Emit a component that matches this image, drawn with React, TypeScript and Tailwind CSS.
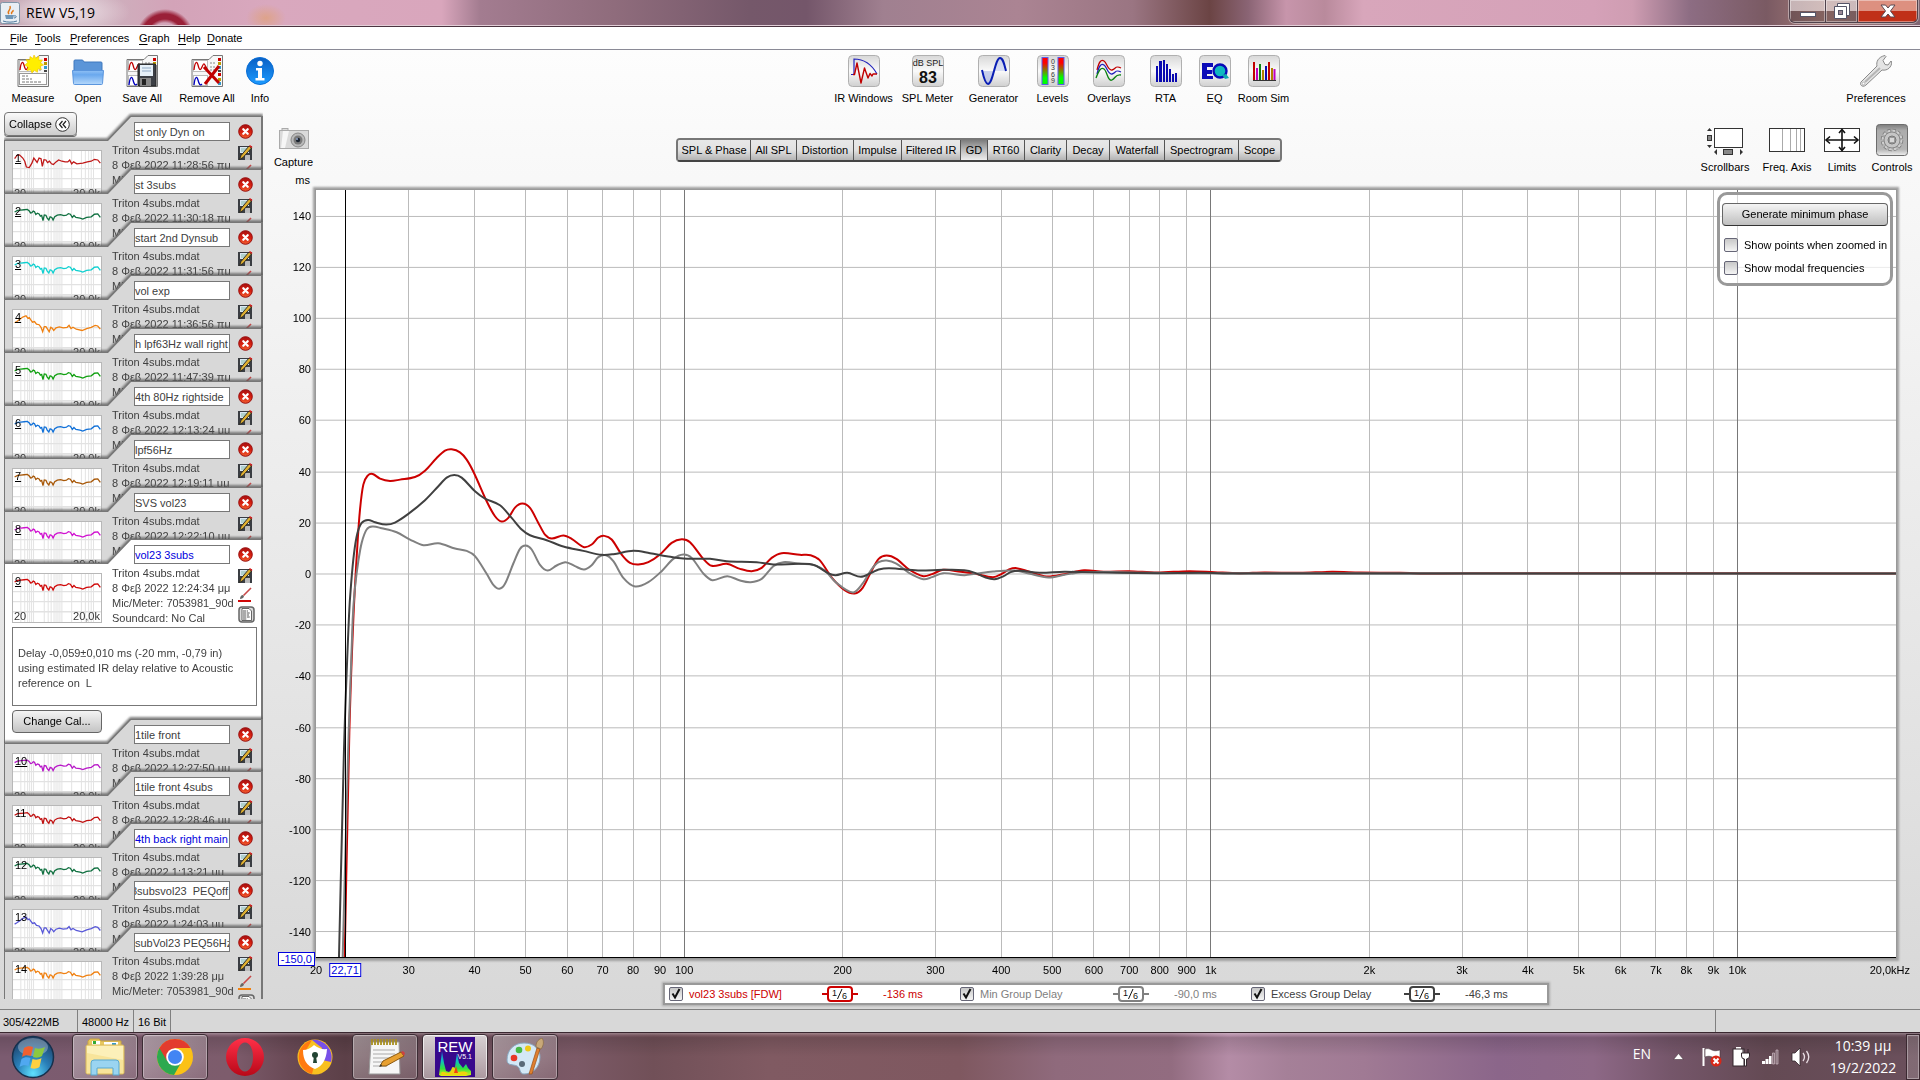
import React from "react";

type Pt = [number, number];

/* ---------- helpers ---------- */

function smooth(pts: Pt[]): string {
  let d = `M${pts[0][0]} ${pts[0][1]}`;
  for (let i = 0; i < pts.length - 1; i++) {
    const p0 = pts[Math.max(0, i - 1)];
    const p1 = pts[i];
    const p2 = pts[i + 1];
    const p3 = pts[Math.min(pts.length - 1, i + 2)];
    const h = (p2[0] - p1[0]) / 3;
    const m1 = (p2[1] - p0[1]) / (p2[0] - p0[0] || 1);
    const m2 = (p3[1] - p1[1]) / (p3[0] - p1[0] || 1);
    d += ` C${p1[0] + h} ${p1[1] + m1 * h} ${p2[0] - h} ${p2[1] - m2 * h} ${p2[0]} ${p2[1]}`;
  }
  return d;
}

const xPct = (f: number) => (Math.log10(f / 20) / 3) * 100;
const yPct = (v: number) => ((150 - v) / 300) * 100;

/* ---------- chart data (three drawing units per pixel) ---------- */

const redCurve: Pt[] = [
  [134, 1674], [148, 1000], [160, 660], [172, 440], [180, 330], [190, 255], [204, 227], [218, 223], [240, 237], [270, 244],
  [300, 240], [345, 232], [375, 213], [410, 175], [435, 153], [455, 149], [480, 158], [500, 180], [522, 220], [560, 305],
  [585, 350], [605, 366], [625, 355], [645, 324], [667, 312], [690, 325], [715, 370], [735, 405], [755, 417], [790, 408],
  [815, 418], [852, 443], [875, 435], [895, 414], [913, 409], [935, 420], [965, 465], [990, 490], [1015, 495], [1045, 488],
  [1080, 465], [1115, 430], [1145, 419], [1170, 428], [1210, 478], [1235, 499], [1280, 493], [1320, 508], [1355, 515],
  [1385, 505], [1415, 475], [1445, 461], [1500, 466], [1532, 467], [1559, 482], [1596, 535], [1634, 572], [1664, 582],
  [1688, 565], [1714, 515], [1736, 478], [1760, 468], [1789, 478], [1827, 510], [1870, 530], [1896, 524], [1929, 511],
  [1982, 517], [2025, 523], [2079, 533], [2105, 523], [2127, 510], [2150, 506], [2186, 516], [2239, 531], [2293, 524],
  [2352, 512], [2411, 517], [2486, 515], [2571, 519], [2668, 515], [2743, 518], [2818, 521], [2893, 519], [3000, 520],
  [3096, 517], [3180, 519], [3300, 520], [3400, 522], [3600, 521], [4788, 522],
];

const greyCurve: Pt[] = [
  [128, 1674], [146, 1000], [158, 660], [166, 555], [175, 485], [185, 430], [200, 390], [218, 381], [245, 386], [290, 398],
  [330, 420], [370, 437], [415, 431], [465, 447], [500, 454], [525, 470], [560, 523], [580, 556], [598, 568], [615, 553],
  [640, 492], [660, 448], [677, 438], [695, 450], [720, 496], [743, 513], [770, 498], [797, 488], [825, 500], [852, 510],
  [875, 497], [895, 473], [918, 467], [940, 485], [970, 535], [1005, 561], [1045, 548], [1085, 515], [1120, 478],
  [1150, 465], [1175, 475], [1210, 522], [1237, 542], [1282, 530], [1320, 543], [1352, 548], [1385, 538], [1420, 500],
  [1450, 488], [1500, 493], [1543, 497], [1575, 514], [1607, 548], [1659, 579], [1688, 552], [1714, 510], [1736, 488],
  [1760, 483], [1789, 492], [1827, 520], [1870, 539], [1896, 533], [1929, 521], [1993, 527], [2025, 523], [2079, 516],
  [2143, 513], [2186, 522], [2245, 534], [2293, 526], [2346, 518], [2464, 518], [2700, 521], [4788, 522],
];

const darkCurve: Pt[] = [
  [117, 1674], [132, 1050], [147, 650], [154, 545], [162, 462], [172, 402], [185, 370], [204, 361], [225, 368], [258, 375],
  [285, 369], [325, 343], [375, 302], [415, 260], [440, 234], [463, 226], [485, 234], [525, 275], [555, 297], [600, 317],
  [635, 355], [665, 390], [690, 407], [740, 422], [790, 441], [850, 454], [905, 466], [940, 464], [1000, 454], [1050, 461],
  [1100, 470], [1150, 477], [1230, 478], [1280, 485], [1370, 488], [1420, 495], [1500, 493], [1543, 497], [1586, 522],
  [1607, 527], [1642, 520], [1682, 532], [1714, 520], [1736, 510], [1768, 506], [1854, 513], [1929, 511], [1993, 512],
  [2025, 520], [2057, 534], [2084, 539], [2111, 530], [2132, 518], [2159, 514], [2218, 520], [2293, 517], [2411, 519],
  [2571, 521], [2700, 520], [2810, 522], [4788, 522],
];

const minorFreqs = [
  30, 40, 50, 60, 70, 80, 90, 200, 300, 400, 500, 600, 700, 800, 900, 2000, 3000, 4000, 5000, 6000, 7000, 8000, 9000,
];
const majorFreqs = [100, 1000, 10000];
const yTicks = [140, 120, 100, 80, 60, 40, 20, 0, -20, -40, -60, -80, -100, -120, -140];

const freqLabel = (f: number) => (f >= 1000 ? `${f / 1000}k` : `${f}`);

/* ---------- icons ---------- */

function MeasurementSheet({ children }: { children?: React.ReactNode }) {
  return (
    <svg width="32" height="32" viewBox="0 0 32 32" aria-hidden="true">
      <path d="M1 4.500h17l4-4h9.500v31H1z" fill="#f7f7f7" stroke="#777" />
      <rect x="2.500" y="5.500" width="14" height="11" fill="#fff" stroke="#bbb" />
      <path d="M3 15c1-9 3-9 4-5s2 7 4 2 2-4 5 2" fill="none" stroke="#c00000" strokeWidth="1.300" />
      <path d="M19 8h6M19 12h6M19 15h6" stroke="#888" strokeDasharray="2 1" />
      <path d="M27 3h3v3h-3z" fill="#c00" />
      <path d="M27 7h3v3h-3z" fill="#b90" />
      <path d="M27 11h3v3h-3z" fill="#39c" />
      <path d="M27 15h3v2h-3z" fill="#444" />
      {children}
    </svg>
  );
}

const lowerTrace = (
  <g>
    <rect x="2.500" y="20.500" width="14" height="10" fill="#fff" stroke="#bbb" />
    <path d="M3 30c1-9 3-9 4-5s2 6 4 4" fill="none" stroke="#0000c0" strokeWidth="1.300" />
    <path d="M27 18h3v3h-3z" fill="#c00" />
    <path d="M27 23h3v3h-3z" fill="#b90" />
    <path d="M27 27h3v3h-3z" fill="#39c" />
  </g>
);

function MeasureIcon() {
  return (
    <MeasurementSheet>
      <rect x="2.500" y="18.500" width="27" height="11" fill="#fff" stroke="#999" />
      <path d="M5 21h6M5 24h10M5 27h19" stroke="#777" strokeDasharray="3 1" />
      <path
        d="M17 0l1.800 3.200 3.200-1.900-.3 3.800 3.800-.2-2 3 3 2-3.400 1.500 1.400 3.200-3.500-.8-.6 3.500-3.100-2-2.300 2.700-1.500-3.200-3.400.8 1-3.400L8 10l2.600-2.400L9 4.600l3.700.3L13 1.500l3 2z"
        fill="#ffee00"
        stroke="#f0c000"
        strokeWidth=".6"
      />
    </MeasurementSheet>
  );
}

function OpenIcon() {
  return (
    <svg width="32" height="32" viewBox="0 0 32 32" aria-hidden="true">
      <defs>
        <linearGradient id="fold" x1="0" y1="0" x2="0" y2="1">
          <stop offset="0" stopColor="#8fc0f5" />
          <stop offset=".3" stopColor="#6aa8ee" />
          <stop offset="1" stopColor="#b5d8fb" />
        </linearGradient>
      </defs>
      <path d="M2 6q0-1 1-1h7q1 0 1.500 1l.5 1h17q1 0 1 1v9H2z" fill="#5b95d8" stroke="#3f78be" />
      <path d="M.5 15.500h31l-1 13q0 1-1 1h-27q-1 0-1-1z" fill="url(#fold)" stroke="#5a95dd" />
    </svg>
  );
}

function SaveAllIcon() {
  return (
    <MeasurementSheet>
      {lowerTrace}
      <path d="M12 9h17l1 1v21H13l-1-1z" fill="#3c3f45" stroke="#222" />
      <rect x="14" y="10" width="13" height="11" fill="#e6f0f8" />
      <path d="M16 13h9M16 16h9" stroke="#8fa8c4" />
      <rect x="14" y="23" width="11" height="8" fill="#888" />
      <rect x="16" y="24" width="4" height="6" fill="#222" />
    </MeasurementSheet>
  );
}

function RemoveAllIcon() {
  return (
    <MeasurementSheet>
      {lowerTrace}
      <path d="M13 12l15 16M28 11L14 29" stroke="#c00000" strokeWidth="3" />
    </MeasurementSheet>
  );
}

function InfoIcon() {
  return (
    <svg width="32" height="32" viewBox="0 0 32 32" aria-hidden="true">
      <defs>
        <linearGradient id="info" x1="0" y1="0" x2="0" y2="1">
          <stop offset="0" stopColor="#0a5fc4" />
          <stop offset="1" stopColor="#1c9bff" />
        </linearGradient>
      </defs>
      <circle cx="16" cy="16" r="13.500" fill="url(#info)" stroke="#0a6fd6" />
      <circle cx="16" cy="8.500" r="2.700" fill="#fff" />
      <path d="M12 13h6v10h2.500v2.500h-9V23H14v-7.500h-2z" fill="#fff" />
    </svg>
  );
}

function Tile({ children }: { children: React.ReactNode }) {
  return (
    <svg width="32" height="32" viewBox="0 0 32 32" aria-hidden="true">
      <defs>
        <linearGradient id="tile" x1="0" y1="0" x2="0" y2="1">
          <stop offset="0" stopColor="#d8d8d8" />
          <stop offset=".5" stopColor="#fafafa" />
          <stop offset="1" stopColor="#d0d0d0" />
        </linearGradient>
      </defs>
      <rect x=".5" y=".5" width="31" height="31" rx="4" fill="url(#tile)" stroke="#b0b0b0" />
      {children}
    </svg>
  );
}

const toolIcons: Record<string, React.ReactNode> = {
  "IR Windows": (
    <Tile>
      <path d="M3 19.500h3V4c10 0 18 6 23 15" fill="none" stroke="#2222bb" strokeWidth="1.200" />
      <path d="M5 19.500h1.500L9 8l4 20 3.500-15 3.500 10 2-4.500 2 2.500 1-2h4" fill="none" stroke="#c00000" strokeWidth="1.400" strokeLinejoin="round" />
    </Tile>
  ),
  "SPL Meter": (
    <Tile>
      <text x="16" y="11" textAnchor="middle" fontSize="9" fontFamily="Liberation Sans, sans-serif" fill="#222">
        dB SPL
      </text>
      <text x="16" y="28" textAnchor="middle" fontSize="16" fontWeight="bold" fontFamily="Liberation Sans, sans-serif" fill="#111">
        83
      </text>
    </Tile>
  ),
  Generator: (
    <Tile>
      <path d="M4 16h12c-2 7-4 13-6.500 13S5 21 4 16z" fill="#aab6e4" opacity=".6" />
      <path d="M16 16h12c-1-7-3-13-5.500-13S18 9 16 16z" fill="#c3cdf0" opacity=".6" />
      <path d="M4 15c2 9 4 14 6 14 5 0 7-26 12-26 3 0 4 5 6 13" fill="none" stroke="#0a1eb4" strokeWidth="2" />
    </Tile>
  ),
  Levels: (
    <Tile>
      <defs>
        <linearGradient id="lvl" x1="0" y1="0" x2="0" y2="1">
          <stop offset=".2" stopColor="#ff0000" />
          <stop offset=".75" stopColor="#00ff00" />
        </linearGradient>
      </defs>
      <rect x="5" y="2.500" width="6" height="27" fill="url(#lvl)" stroke="#5a5ae8" />
      <rect x="21" y="2.500" width="6" height="27" fill="url(#lvl)" stroke="#5a5ae8" />
      <g fontSize="7" fontFamily="Liberation Sans, sans-serif" fill="#333" textAnchor="middle">
        <text x="16" y="9">0</text>
        <text x="16" y="15">3</text>
        <text x="16" y="22">6</text>
        <text x="16" y="28">9</text>
      </g>
    </Tile>
  ),
  Overlays: (
    <Tile>
      <path d="M4 15c2-8 4-11 7-9s4 10 8 9 3-5 9-2" fill="none" stroke="#c00000" strokeWidth="1.300" />
      <path d="M4 19c2-8 4-11 7-9s4 10 8 9 3-5 9-2" fill="none" stroke="#2222bb" strokeWidth="1.300" />
      <path d="M3 23c3-8 5-11 8-9s4 13 8 11 3-6 9-5" fill="none" stroke="#0a8010" strokeWidth="1.300" />
    </Tile>
  ),
  RTA: (
    <Tile>
      <path d="M6 27V11h2v16zM9 27V6h3v21zM13 27V5h2v22zM16 27V9h2v18zM19 27V14h2v13zM22 27V19h2v8zM25 27v-9h2v9z" fill="#0a0ab0" />
    </Tile>
  ),
  EQ: (
    <Tile>
      <path d="M3 8h11v4H8v3h5v4H8v2h6v3H3z" fill="#0a0ab8" />
      <circle cx="21" cy="16" r="6.500" fill="#10b8c0" stroke="#0a0ab8" strokeWidth="2.400" />
      <path d="M23 20l4-1 3 4-4 1z" fill="#10a8b0" />
    </Tile>
  ),
  "Room Sim": (
    <Tile>
      <path d="M5 25.500h23" stroke="#333" />
      <path d="M6 25V7" stroke="#c00000" strokeWidth="2" />
      <path d="M9 25V13M26.500 25V14" stroke="#c000c0" strokeWidth="2" />
      <path d="M12 25V9" stroke="#0a8010" strokeWidth="2" />
      <path d="M15 25V15M24 25V13" stroke="#b08000" strokeWidth="2" />
      <path d="M18 25V11" stroke="#0a0ab0" strokeWidth="2" />
      <path d="M21 25V7" stroke="#c00000" strokeWidth="2" />
    </Tile>
  ),
};

function WrenchIcon() {
  return (
    <svg width="32" height="32" viewBox="0 0 32 32" aria-hidden="true">
      <path
        d="M1 27L17 11c-1-4 1-9 8-10.500l1 1-3 4 2 4 3 .5 3-4 .7 1c0 5-4 9-9.700 8L6 30c-3 3-7 0-5-3z"
        fill="#e4e4e4"
        stroke="#8a8a8a"
      />
      <path d="M5 27L20 13" stroke="#b5b5b5" strokeWidth="2" />
      <circle cx="3.500" cy="28.500" r="1.300" fill="#fff" stroke="#999" strokeWidth=".6" />
    </svg>
  );
}

function CameraIcon() {
  return (
    <svg width="30" height="22" viewBox="0 0 30 22" aria-hidden="true">
      <rect x="3" y=".5" width="6" height="3" fill="#ddd" stroke="#aaa" />
      <rect x=".5" y="2.500" width="29" height="18" fill="#dadada" stroke="#aaa" />
      <path d="M4 3h6l-4 17H2z" fill="#f6f6f6" />
      <circle cx="19" cy="12" r="7" fill="#b9b9b9" stroke="#888" />
      <circle cx="19" cy="12" r="4.500" fill="#7a7a7a" />
      <circle cx="19" cy="12" r="2.200" fill="#1c2430" />
      <circle cx="18" cy="11" r="1" fill="#9ac" />
    </svg>
  );
}

function ScrollbarsIcon() {
  return (
    <svg width="36" height="32" viewBox="0 0 36 32" aria-hidden="true">
      <rect x="7.500" y="4.500" width="28" height="19" fill="#fff" stroke="#333" />
      <path d="M0 7l2.500-3L5 7zM0 21l2.500 3L5 21z" fill="#333" />
      <rect x=".5" y="11.500" width="4" height="5" fill="#888" stroke="#333" />
      <path d="M10 25v6l-3-3zM33 25v6l3-3z" fill="#333" />
      <rect x="16.500" y="25.500" width="9" height="5" fill="#888" stroke="#333" />
    </svg>
  );
}

function FreqAxisIcon() {
  return (
    <svg width="36" height="32" viewBox="0 0 36 32" aria-hidden="true">
      <rect x=".5" y="4.500" width="35" height="23" fill="#fff" stroke="#333" />
      <path d="M13.500 5v22M21.500 5v22M27.500 5v22M31.500 5v22" stroke="#aaa" />
    </svg>
  );
}

function LimitsIcon() {
  return (
    <svg width="36" height="32" viewBox="0 0 36 32" aria-hidden="true">
      <rect x=".5" y="4.500" width="35" height="23" fill="#fff" stroke="#333" />
      <path d="M2 16h32M18 6v20" stroke="#111" strokeWidth="1.600" />
      <path d="M6 12.500L2 16l4 3.500M30 12.500l4 3.500-4 3.500M15 9l3-3.500L21 9M15 23l3 3.500 3-3.500" fill="none" stroke="#111" strokeWidth="1.600" />
    </svg>
  );
}

function ControlsIcon() {
  return (
    <svg width="32" height="32" viewBox="0 0 32 32" aria-hidden="true">
      <defs>
        <linearGradient id="ctl" x1="0" y1="0" x2="0" y2="1">
          <stop offset="0" stopColor="#7c7c7c" />
          <stop offset=".2" stopColor="#acacac" />
          <stop offset=".8" stopColor="#b4b4b4" />
          <stop offset="1" stopColor="#f0f0f0" />
        </linearGradient>
      </defs>
      <rect x=".5" y=".5" width="31" height="31" rx="3" fill="url(#ctl)" stroke="#6c6c6c" />
      <circle cx="16" cy="16" r="9.500" fill="none" stroke="#777" strokeWidth="3.500" strokeDasharray="3.200 1.780" />
      <circle cx="16" cy="16" r="9.300" fill="none" stroke="#cfcfcf" strokeWidth="2.400" strokeDasharray="2.800 2.070" />
      <circle cx="16" cy="16" r="8" fill="#c6c6c6" stroke="#888" />
      <circle cx="16" cy="16" r="4" fill="#a8a8a8" stroke="#777" />
      <rect x="13.500" y="13.500" width="5" height="5" rx="1" fill="#d8d8d8" stroke="#888" strokeWidth=".7" />
    </svg>
  );
}

function RemoveIcon() {
  return (
    <svg width="15" height="15" viewBox="0 0 15 15" aria-hidden="true">
      <defs>
        <linearGradient id="rm" x1="0" y1="0" x2="0" y2="1">
          <stop offset="0" stopColor="#a81010" />
          <stop offset=".55" stopColor="#d82010" />
          <stop offset="1" stopColor="#f06030" />
        </linearGradient>
      </defs>
      <circle cx="7.500" cy="7.500" r="6.800" fill="url(#rm)" stroke="#9a0c0c" />
      <path d="M5.300 5.300l4.400 4.400M9.700 5.300L5.300 9.700" stroke="#fff" strokeWidth="2.300" strokeLinecap="round" />
    </svg>
  );
}

function FloppyPencilIcon() {
  return (
    <svg width="15" height="15" viewBox="0 0 15 15" aria-hidden="true">
      <rect x="0" y="1" width="14" height="14" fill="#3a3d42" />
      <rect x="2" y="2" width="9" height="6" fill="#dbe8f2" />
      <path d="M3 4h6M3 6h4" stroke="#8ba" />
      <rect x="7" y="10" width="5" height="5" fill="#bbb" />
      <path d="M1.500 14.500L3 10.500 11 1l2.500 2L5 12.500z" fill="#e0b030" stroke="#222" strokeWidth=".9" />
      <path d="M11 1l1-1 2.500 2-1 1z" fill="#e02020" />
    </svg>
  );
}

function BrushIcon({ color }: { color: string }) {
  return (
    <svg width="14" height="15" viewBox="0 0 14 15" aria-hidden="true">
      <path d="M2 12c0-2 1-4 3-4l1 1.500C5.500 11 4 12 2 12z" fill="#666" />
      <path d="M5.500 8.500L13 1" stroke="#c84848" strokeWidth="1.600" />
      <path d="M0 14h13" stroke={color} strokeWidth="2" />
    </svg>
  );
}

function NotesIcon() {
  return (
    <svg width="17" height="17" viewBox="0 0 17 17" aria-hidden="true">
      <rect x="1" y="1" width="15" height="15" rx="3" fill="#ddd" stroke="#666" strokeWidth="1.500" />
      <path d="M4 2.500h7l2.500 2.500v9.500H4z" fill="#fff" stroke="#444" strokeWidth=".8" />
      <path d="M5 5h5M5 7h7M5 9h6M5 11h7M5 13h4" stroke="#444" strokeWidth=".9" strokeDasharray="3 .7" />
    </svg>
  );
}

function JavaIcon() {
  return (
    <svg width="20" height="22" viewBox="0 0 20 22" aria-hidden="true">
      <rect x=".5" y=".5" width="19" height="21" rx="2" fill="#e8eef4" stroke="#7f95a8" />
      <path d="M9 12c-3-3 3-4 1-8M12 12c-2-2 2-2 1-4" fill="none" stroke="#e07818" strokeWidth="1.500" />
      <path d="M5 13h9l-1 4H6z" fill="#6f97b8" />
      <path d="M3 19c4 1.500 10 1.500 14 0M14 14c3-1 3 2 0 2" fill="none" stroke="#4b779c" />
    </svg>
  );
}

/* ---------- sidebar ---------- */

const baseTrace =
  "M5 25L14 20 24 19 34 18 44 17 50 22 54 28 58 27 62 22 66 24 70 33 75 29 80 31 84 38 88 36 92 52 96 34 101 35 105 44 110 50 114 40 119 42 123 50 128 40 136 35 146 33 156 36 164 35 170 30 176 32 182 42 187 36 193 42 206 44 214 47 226 42 240 40 250 32 260 31 268 42";
const firstTrace =
  "M5 24L12 14 20 12 30 22 36 32 41 50 50 52 58 38 64 22 70 30 74 36 80 22 86 24 90 48 95 27 101 28 106 36 112 32 118 40 124 42 132 34 140 28 150 32 160 34 168 34 174 28 180 40 186 34 196 40 214 38 228 34 240 32 250 26 260 28 268 38";
const highTrace =
  "M5 40L12 36 20 30 30 22 40 18 46 26 50 24 54 30 60 38 66 36 72 44 80 46 86 54 91 68 96 52 101 52 106 60 111 68 116 54 121 58 125 64 132 56 142 53 154 56 166 54 172 48 178 58 184 54 194 60 212 64 226 58 240 54 252 48 260 50 268 60";

interface Measurement {
  n: number;
  name: string;
  date: string;
  color: string;
  trace?: string;
  dy?: number;
  blue?: boolean;
  selected?: boolean;
  shift?: boolean;
}

const measurements: Measurement[] = [
  { n: 1, name: "st only Dyn on", date: "8 Φεβ 2022 11:28:56 πμ", color: "#c01818", trace: firstTrace },
  { n: 2, name: "st 3subs", date: "8 Φεβ 2022 11:30:18 πμ", color: "#107040" },
  { n: 3, name: "start 2nd Dynsub", date: "8 Φεβ 2022 11:31:56 πμ", color: "#10d0d0" },
  { n: 4, name: "vol exp", date: "8 Φεβ 2022 11:36:56 πμ", color: "#f08010", trace: highTrace },
  { n: 5, name: "h lpf63Hz wall right", date: "8 Φεβ 2022 11:47:39 πμ", color: "#10a010" },
  { n: 6, name: "4th 80Hz rightside", date: "8 Φεβ 2022 12:13:24 μμ", color: "#1070d8" },
  { n: 7, name: "lpf56Hz", date: "8 Φεβ 2022 12:19:11 μμ", color: "#a85808" },
  { n: 8, name: "SVS vol23", date: "8 Φεβ 2022 12:22:10 μμ", color: "#d010d0" },
  { n: 9, name: "vol23 3subs", date: "8 Φεβ 2022 12:24:34 μμ", color: "#d00808", selected: true, blue: true },
  { n: 10, name: "1tile front", date: "8 Φεβ 2022 12:27:50 μμ", color: "#b818c8", dy: 2 },
  { n: 11, name: "1tile front 4subs", date: "8 Φεβ 2022 12:28:46 μμ", color: "#c01010", dy: 4 },
  { n: 12, name: "4th back right main", date: "8 Φεβ 2022 1:13:21 μμ", color: "#107040", blue: true },
  { n: 13, name: "3subsvol23  PEQoff", date: "8 Φεβ 2022 1:24:03 μμ", color: "#5858d8", trace: highTrace, dy: 4, shift: true },
  { n: 14, name: "subVol23 PEQ56Hz", date: "8 Φεβ 2022 1:39:28 μμ", color: "#f08010" },
];

function Thumbnail({ m }: { m: Measurement }) {
  return (
    <div className="relative h-[50px] w-[90px] border border-[#b8b8b8] bg-white text-[11px] leading-3 text-[#333]">
      <svg className="block h-full w-full" viewBox="0 0 270 150" preserveAspectRatio="none" aria-hidden="true">
        <path
          d="M24 0V150M36 0V150M45 0V150M51 0V150M57 0V150M63 0V150M96 0V150M108 0V150M117 0V150M126 0V150M132 0V150M138 0V150M144 0V150M150 0V150M180 0V150M210 0V150M222 0V150M232 0V150M240 0V150M247 0V150"
          stroke="#e2e2e2"
          strokeWidth="3"
        />
        <path d="M0 55H270M0 86H270M0 118H270" stroke="#e2e2e2" strokeWidth="4" />
        <path
          d={m.trace ?? baseTrace}
          transform={`translate(0 ${m.dy ?? 0})`}
          fill="none"
          stroke={m.color}
          strokeWidth="4"
        />
      </svg>
      <span className={`absolute left-0.5 top-px text-black ${m.n <= 10 ? "underline" : ""}`}>{m.n}</span>
      <span className="absolute bottom-0 left-px">20</span>
      <span className="absolute bottom-0 right-px">20,0k</span>
    </div>
  );
}

const edgeShape =
  "absolute inset-0 [clip-path:polygon(126px_0,100%_0,100%_100%,0_100%,0_24px,103px_24px)]";
const faceShape =
  "absolute inset-px right-[2px] [clip-path:polygon(126px_0,100%_0,100%_100%,0_100%,0_24px,103px_24px)]";

function Card({ m, pitch }: { m: Measurement; pitch: string }) {
  return (
    <li className={`${pitch} relative shrink-0`}>
      <div
        className={`${m.selected ? "h-[210px]" : "h-[84px]"} relative w-[259px] drop-shadow-[0_-2px_1px_rgba(90,90,90,0.75)]`}
      >
        <div className={`${edgeShape} bg-[#777777]`} />
        <div className={`${faceShape} ${m.selected ? "bg-white" : "bg-[#d8d8d8]"}`} />
        <div className="relative flex flex-col">
          <div className="ml-[130px] mt-1.5 flex items-center gap-2">
            <input
              aria-label={`Name of measurement ${m.n}`}
              defaultValue={m.name}
              className={`h-[19px] w-24 border border-[#777777] bg-white text-[11px] outline-none ${
                m.blue ? "text-[#0000dd]" : "text-[#404040]"
              } ${m.shift ? "-indent-1" : ""}`}
            />
            <button aria-label={`Remove measurement ${m.n}`}>
              <RemoveIcon />
            </button>
          </div>
          <div className="ml-2 mt-0.5 flex">
            <div className="mt-[7px]">
              <Thumbnail m={m} />
            </div>
            <div className="ml-2.5 w-[118px] whitespace-nowrap text-[11px] leading-[15px] text-[#404040]">
              <p>Triton 4subs.mdat</p>
              <p>{m.date}</p>
              <p>Mic/Meter: 7053981_90d</p>
              <p>Soundcard: No Cal</p>
            </div>
            <div className="ml-2 flex flex-col items-start gap-1 pt-0.5">
              <button aria-label="Save measurement">
                <FloppyPencilIcon />
              </button>
              <button aria-label="Trace colour">
                <BrushIcon color={m.color} />
              </button>
              <button aria-label="Notes">
                <NotesIcon />
              </button>
            </div>
          </div>
          {m.selected && (
            <div className="ml-2 mr-1.5 flex flex-col items-start">
              <div className="mt-px h-[79px] w-full border border-[#777777] bg-white px-[5px] pt-[18px] text-[11px] leading-[15px] text-[#404040]">
                <p>Delay -0,059±0,010 ms (-20 mm, -0,79 in)</p>
                <p>using estimated IR delay relative to Acoustic</p>
                <p className="whitespace-pre">{"reference on  L"}</p>
              </div>
              <button className="mt-1 h-[23px] w-[90px] rounded border border-[#666666] bg-linear-to-b from-[#f4f4f4] to-[#c4c4c4] text-[11px] text-black">
                Change Cal...
              </button>
            </div>
          )}
        </div>
      </div>
    </li>
  );
}

function Sidebar() {
  return (
    <aside className="flex w-[263px] shrink-0 flex-col overflow-hidden pl-1 pb-2.5">
      <button className="relative z-10 flex h-6 w-[73px] shrink-0 items-center justify-between rounded border border-[#777777] bg-linear-to-b from-[#fafafa] to-[#cccccc] pl-1 pr-1.5 text-[11px] text-black shadow-[0_1px_0_#666666]">
        Collapse
        <svg width="15" height="15" viewBox="0 0 15 15" aria-hidden="true">
          <circle cx="7.500" cy="7.500" r="6.800" fill="#fff" stroke="#333" />
          <path d="M7.500 4L4.500 7.500l3 3.500M11 4L8 7.500l3 3.500" fill="none" stroke="#222" strokeWidth="1.200" />
        </svg>
      </button>
      <ul className="-mt-6 flex min-h-0 flex-1 flex-col overflow-hidden pt-1">
        {measurements.map((m) => (
          <Card key={m.n} m={m} pitch={m.selected ? "h-[180px]" : m.n < 8 ? "h-[53px]" : "h-[52px]"} />
        ))}
      </ul>
    </aside>
  );
}

/* ---------- header ---------- */

function TitleBar() {
  return (
    <header className="flex h-[27px] shrink-0 items-start justify-between border-b border-[#4a3440] bg-[radial-gradient(circle_at_165px_38px,transparent_15px,#9a2038_19px,#9a2038_24px,transparent_29px),radial-gradient(ellipse_20px_14px_at_266px_18px,#e0a070aa,transparent),radial-gradient(ellipse_70px_24px_at_60px_12px,#f4e8ee,transparent),linear-gradient(90deg,#b898a6_0,#cdb2be_5%,#d3a3b8_9%,#d9a8be_14%,#d9a6bc_23%,#a37c90_25%,#8f6c7c_32%,#75586a_39%,#74566a_42%,#a08090_46%,#ab8493_53%,#9a7582_59%,#6b4444_63%,#8a6474_65%,#c795ab_67%,#b98a9c_69%,#d8a6bb_71%,#d5a1b8_83%,#cf9db2_85%,#8d6d83_88%,#7a5a63_92%,#a57b78_95%,#7f6571_100%)] shadow-[inset_0_-1px_0_#e3cfd8]">
      <div className="flex items-center gap-1.5 pt-0.5">
        <JavaIcon />
        <h1 className="font-['Open_Sans','Noto_Sans',sans-serif] text-sm text-black">REW V5,19</h1>
      </div>
      <div className="mr-0.5 flex h-[23px] overflow-hidden rounded-b-md border border-t-0 border-[#50424c] shadow-[0_0_0_1px_#ffffff66]">
        <button aria-label="Minimize" className="grid w-9 place-items-center border-r border-[#50424c] bg-linear-to-b from-white/50 from-50% to-black/20 to-50% shadow-[inset_0_0_0_1px_#ffffff66]">
          <svg width="18" height="16" viewBox="0 0 18 16" aria-hidden="true">
            <rect x="1.500" y="9.500" width="15" height="4" fill="#fff" stroke="#555568" />
          </svg>
        </button>
        <button aria-label="Restore" className="grid w-8 place-items-center border-r border-[#50424c] bg-linear-to-b from-white/50 from-50% to-black/20 to-50% shadow-[inset_0_0_0_1px_#ffffff66]">
          <svg width="18" height="17" viewBox="0 0 18 17" aria-hidden="true">
            <path d="M4.500 .5h12v12h-12z" fill="#fff" stroke="#555568" />
            <path d="M1.500 3.500h12v12h-12z" fill="#fff" stroke="#555568" />
            <rect x="5.500" y="7.500" width="4" height="4" fill="#9a8a98" stroke="#555568" />
          </svg>
        </button>
        <button aria-label="Close" className="grid w-[59px] place-items-center bg-linear-to-b from-[#dd9080] from-50% to-[#c03018] to-50% shadow-[inset_0_0_0_1px_#ffffff66]">
          <svg width="16" height="14" viewBox="0 0 16 14" aria-hidden="true">
            <path d="M1 1h4.500L8 4l2.500-3H15l-4.500 6 4.500 6h-4.500L8 10l-2.500 3H1l4.500-6z" fill="#fff" stroke="#5a4850" />
          </svg>
        </button>
      </div>
    </header>
  );
}

const menus = [
  { label: "File", box: "w-[25px]" },
  { label: "Tools", box: "w-[35px]" },
  { label: "Preferences", box: "w-[69px]" },
  { label: "Graph", box: "w-[39px]" },
  { label: "Help", box: "w-[29px]" },
  { label: "Donate", box: "w-[40px]" },
];

const fileTools = [
  { label: "Measure", box: "w-[54px]", icon: <MeasureIcon /> },
  { label: "Open", box: "w-14", icon: <OpenIcon /> },
  { label: "Save All", box: "w-13", icon: <SaveAllIcon /> },
  { label: "Remove All", box: "w-[78px]", icon: <RemoveAllIcon /> },
  { label: "Info", box: "w-7", icon: <InfoIcon /> },
];

const mainTools = [
  { label: "IR Windows", box: "w-16" },
  { label: "SPL Meter", box: "w-16" },
  { label: "Generator", box: "w-[68px]" },
  { label: "Levels", box: "w-[50px]" },
  { label: "Overlays", box: "w-[63px]" },
  { label: "RTA", box: "w-[50px]" },
  { label: "EQ", box: "w-12" },
  { label: "Room Sim", box: "w-[50px]" },
];

function ToolButton({ label, box, icon }: { label: string; box: string; icon: React.ReactNode }) {
  return (
    <button className={`${box} flex flex-col items-center gap-1 whitespace-nowrap text-[11px] leading-[14px] text-black`}>
      {icon}
      <span>{label}</span>
    </button>
  );
}

const tabs = [
  { label: "SPL & Phase", box: "w-[73px]" },
  { label: "All SPL", box: "w-[46px]" },
  { label: "Distortion", box: "w-[57px]" },
  { label: "Impulse", box: "w-12" },
  { label: "Filtered IR", box: "w-[59px]" },
  { label: "GD", box: "w-[27px]" },
  { label: "RT60", box: "w-[37px]" },
  { label: "Clarity", box: "w-[42px]" },
  { label: "Decay", box: "w-[43px]" },
  { label: "Waterfall", box: "w-[55px]" },
  { label: "Spectrogram", box: "w-[74px]" },
  { label: "Scope", box: "w-[41px]" },
];

function GraphHeader() {
  return (
    <div className="flex h-[78px] shrink-0 items-start justify-between pr-0.5">
      <div className="flex w-[53px] flex-col pl-2 pt-4">
        <button className="flex flex-col items-center gap-[5px] text-[11px] leading-[14px]">
          <CameraIcon />
          Capture
        </button>
        <span className="mt-1 pr-1.5 text-right text-[11px] leading-[14px]">ms</span>
      </div>
      <div className="flex flex-1 justify-center pr-[52px] pt-[26px]" role="tablist">
        <div className="flex h-6 overflow-hidden rounded border-2 border-[#777777] border-b-[#444444]">
          {tabs.map((t) => (
            <button
              key={t.label}
              role="tab"
              aria-selected={t.label === "GD"}
              className={`${t.box} whitespace-nowrap border-r border-[#555555] text-center text-[11px] leading-5 last:border-r-0 ${
                t.label === "GD"
                  ? "bg-linear-to-b from-[#7c7c7c] via-[#bcbcbc] to-[#eeeeee]"
                  : "bg-linear-to-b from-[#e8e8e8] via-[#e2e2e2] to-[#b4b4b4]"
              }`}
            >
              {t.label}
            </button>
          ))}
        </div>
      </div>
      <div className="flex pt-3">
        <ToolButton label="Scrollbars" box="w-[62px]" icon={<ScrollbarsIcon />} />
        <ToolButton label="Freq. Axis" box="w-[62px]" icon={<FreqAxisIcon />} />
        <ToolButton label="Limits" box="w-12" icon={<LimitsIcon />} />
        <ToolButton label="Controls" box="w-[52px]" icon={<ControlsIcon />} />
      </div>
    </div>
  );
}

/* ---------- chart ---------- */

function Plot() {
  const vx = (f: number) => Math.floor((xPct(f) / 100) * 1580) + 0.5;
  const vy = (v: number) => Math.round((yPct(v) / 100) * 768) + 0.5;
  return (
    <svg className="absolute inset-0 h-full w-full" viewBox="0 0 1580 768" preserveAspectRatio="none" aria-label="Group delay chart">
      {yTicks.map((v) => (
        <path key={v} d={`M0 ${vy(v)}H1580`} stroke="#bbbbbb" />
      ))}
      {minorFreqs.map((f) => (
        <path key={f} d={`M${vx(f)} 0V768`} stroke="#bbbbbb" />
      ))}
      {majorFreqs.map((f) => (
        <path key={f} d={`M${vx(f)} 0V768`} stroke="#777777" />
      ))}
      <g transform="translate(-16 210) scale(.33333)" fill="none" strokeWidth="6">
        <path d={smooth(redCurve)} stroke="#cc0000" />
        <path d={smooth(greyCurve)} stroke="#808080" />
        <path d={smooth(darkCurve)} stroke="#404040" />
      </g>
      <path d="M29.500 0V768" stroke="#000" />
    </svg>
  );
}

function TickBox({ checked }: { checked?: boolean }) {
  return (
    <span className="grid size-3.5 shrink-0">
      <input
        type="checkbox"
        defaultChecked={checked}
        className="peer col-start-1 row-start-1 size-3.5 appearance-none rounded-xs border border-[#666677] bg-linear-to-b from-[#c8c8c8] to-[#f4f4f4]"
      />
      <svg className="pointer-events-none invisible col-start-1 row-start-1 peer-checked:visible" width="14" height="14" viewBox="0 0 14 14" aria-hidden="true">
        <path d="M3.500 6.500L6 10.500 10.500 2" fill="none" stroke="#111" strokeWidth="2" />
      </svg>
    </span>
  );
}

function ControlsPanel() {
  return (
    <div className="absolute right-[3px] top-0.5 flex h-[94px] w-44 flex-col overflow-hidden rounded-[10px] border-3 border-[#999999] bg-white/70 px-0.5 pt-2 text-[11px]">
      <button className="h-[23px] rounded border border-[#666666] border-b-[#333333] bg-linear-to-b from-[#f4f4f4] to-[#bfbfbf]">
        Generate minimum phase
      </button>
      <label className="mt-3 flex h-3.5 items-center gap-1.5 whitespace-nowrap pl-0.5">
        <TickBox />
        Show points when zoomed in
      </label>
      <label className="mt-[9px] flex h-3.5 items-center gap-1.5 whitespace-nowrap pl-0.5">
        <TickBox />
        Show modal frequencies
      </label>
    </div>
  );
}

function Smoothing() {
  return (
    <svg width="36" height="16" viewBox="0 0 36 16" aria-label="1/6 octave smoothing">
      <path d="M0 8h6M30 8h6" stroke="currentColor" strokeWidth="2" />
      <rect x="6" y="1" width="24" height="14" rx="3" fill="#fff" stroke="currentColor" strokeWidth="2" />
      <path d="M15.500 13L20 3" stroke="#111" />
      <text x="10" y="10" fontSize="9" fontFamily="Liberation Sans, sans-serif" fill="#111">
        1
      </text>
      <text x="20" y="13" fontSize="9" fontFamily="Liberation Sans, sans-serif" fill="#111">
        6
      </text>
    </svg>
  );
}

const legend = [
  { label: "vol23 3subs [FDW]", value: "-136 ms", tone: "text-[#cc0000]" },
  { label: "Min Group Delay", value: "-90,0 ms", tone: "text-[#808080]" },
  { label: "Excess Group Delay", value: "-46,3 ms", tone: "text-[#404040]" },
];

function Chart() {
  return (
    <div className="flex min-h-0 flex-1 flex-col">
      <div className="flex min-h-0 flex-1">
        <div className="relative w-[53px] shrink-0 text-[11px] leading-[13px]">
          {yTicks.map((v) => (
            <span key={v} className="absolute right-[5px] -translate-y-1/2" style={{ top: `${yPct(v)}%` }}>
              {v}
            </span>
          ))}
          <span className="absolute right-px top-full z-10 -mt-1.5 border border-[#0000dd] bg-white px-0.5 leading-3 text-[#0000dd]">
            -150,0
          </span>
        </div>
        <div className="relative flex-1 border-b border-black bg-white shadow-[0_0_0_1px_#999999,0_0_2px_3px_#a0a0a0]">
          <Plot />
          <ControlsPanel />
        </div>
        <div className="w-6 shrink-0" />
      </div>
      <div className="flex h-[25px] shrink-0">
        <div className="w-[53px] shrink-0" />
        <div className="relative flex-1 text-[11px] leading-3">
          {[20, ...minorFreqs, ...majorFreqs].map((f) => (
            <span key={f} className="absolute top-1.5 -translate-x-1/2" style={{ left: `${xPct(f)}%` }}>
              {freqLabel(f)}
            </span>
          ))}
          <span className="absolute -right-3.5 top-1.5">20,0kHz</span>
          <span
            className="absolute top-[5px] -translate-x-1/2 border border-[#0000dd] bg-white px-px text-[#0000dd]"
            style={{ left: `${xPct(22.71)}%` }}
          >
            22,71
          </span>
        </div>
        <div className="w-6 shrink-0" />
      </div>
      <div className="mb-1 flex shrink-0 justify-center pl-[53px] pr-6">
        <div className="flex h-[22px] w-[886px] border-2 border-[#999999] bg-white pl-1 shadow-[0_0_2px_1px_#aaaaaa]">
          {legend.map((l) => (
            <div key={l.label} className={`${l.tone} flex w-[291px] items-center text-[11px] leading-3`}>
              <label className="flex w-[153px] items-center gap-1.5 whitespace-nowrap">
                <TickBox checked />
                {l.label}
              </label>
              <Smoothing />
              <span className="ml-[25px] whitespace-nowrap">{l.value}</span>
            </div>
          ))}
        </div>
      </div>
    </div>
  );
}

/* ---------- status bar and taskbar ---------- */

function StatusBar() {
  return (
    <footer className="flex h-[23px] shrink-0 border-t border-[#808080] bg-[#d8d8d8] text-[11px] leading-6 text-black">
      <span className="w-[78px] border-r border-[#808080] pl-[3px]">305/422MB</span>
      <span className="w-14 border-r border-[#808080] text-center">48000 Hz</span>
      <span className="w-[37px] border-r border-[#808080] text-center">16 Bit</span>
      <span className="flex-1 border-r border-[#808080]" />
      <span className="w-[204px]" />
    </footer>
  );
}

function TaskButton({
  label,
  frame,
  children,
}: {
  label: string;
  frame: "none" | "open" | "active";
  children: React.ReactNode;
}) {
  const look =
    frame === "none"
      ? "border-transparent"
      : frame === "open"
        ? "border-[#3c2c34] bg-linear-to-br from-white/40 to-white/10 shadow-[inset_0_0_0_1px_#ffffff55]"
        : "border-[#3c2c34] bg-linear-to-b from-white/75 to-white/40 shadow-[inset_0_0_0_1px_#ffffffaa]";
  return (
    <button aria-label={label} className={`${look} grid h-[46px] w-[66px] place-items-center rounded border`}>
      {children}
    </button>
  );
}

function StartOrb() {
  return (
    <svg width="44" height="44" viewBox="0 0 44 44" aria-hidden="true">
      <defs>
        <radialGradient id="orb" cx=".5" cy=".9" r=".9">
          <stop offset="0" stopColor="#5fe0ff" />
          <stop offset=".45" stopColor="#2a7fb8" />
          <stop offset="1" stopColor="#1c3a60" />
        </radialGradient>
      </defs>
      <circle cx="22" cy="22" r="20.500" fill="url(#orb)" stroke="#16304c" strokeWidth="1.500" />
      <ellipse cx="22" cy="12" rx="15" ry="9" fill="#fff" opacity=".3" />
      <path d="M13 13c3-2 6-2 9-1l-2 9c-3-1-6-1-9 1z" fill="#f06030" />
      <path d="M24 13c3 1 6 1 10-1l-3 9c-3 2-6 2-9 1z" fill="#8cc840" />
      <path d="M10.500 24c3-2 6-2 9-1l-2 8c-3-1-6-1-9 1z" fill="#50a8f0" />
      <path d="M21.500 24c3 1 6 1 9-1l-2 9c-3 2-6 2-9 1z" fill="#ffd040" />
    </svg>
  );
}

function ExplorerIcon() {
  return (
    <svg width="42" height="40" viewBox="0 0 42 40" aria-hidden="true">
      <path d="M4 8V4l2-2h9l2 2h20v6H4z" fill="#e8c860" stroke="#c8a440" />
      <path d="M8 4h8v4H8zM20 5h14v4H20z" fill="#fff" />
      <path d="M9 4h3v3H9z" fill="#3a3" />
      <path d="M28 6h4v3h-4z" fill="#39c" />
      <rect x="2" y="8" width="38" height="29" rx="1.500" fill="#f8e49a" stroke="#d8b858" />
      <path d="M3 9h36v14L3 16z" fill="#fdf2c0" opacity=".8" />
      <path d="M7 38V26q0-3 3-3h22q3 0 3 3v12h-6v-7H13v7z" fill="#9ad4f0" stroke="#58a8d0" />
    </svg>
  );
}

function ChromeIcon() {
  return (
    <svg width="38" height="38" viewBox="0 0 38 38" aria-hidden="true">
      <circle cx="19" cy="19" r="18" fill="#fbc116" />
      <path d="M3.400 10A18 18 0 0 0 18 37l8-14-7-4z" fill="#2da94f" />
      <path d="M3.400 10L11 23l8-13h15.600A18 18 0 0 0 3.400 10z" fill="#e33b2e" />
      <circle cx="19" cy="19" r="8.800" fill="#fff" />
      <circle cx="19" cy="19" r="7" fill="#4285f4" />
    </svg>
  );
}

function OperaIcon() {
  return (
    <svg width="38" height="38" viewBox="0 0 38 38" aria-hidden="true">
      <defs>
        <linearGradient id="op" x1="0" y1="0" x2="0" y2="1">
          <stop offset="0" stopColor="#ff3048" />
          <stop offset="1" stopColor="#b80818" />
        </linearGradient>
      </defs>
      <path
        fillRule="evenodd"
        d="M19 0a19 19 0 1 0 0 38 19 19 0 1 0 0-38zm0 4.500c5 0 8 6.500 8 14.500s-3 14.500-8 14.500-8-6.500-8-14.500 3-14.500 8-14.500z"
        fill="url(#op)"
      />
    </svg>
  );
}

function SecureBrowserIcon() {
  return (
    <svg width="38" height="38" viewBox="0 0 38 38" aria-hidden="true">
      <circle cx="19" cy="19" r="17.500" fill="#f8c020" />
      <path d="M16 2a17.500 17.500 0 0 1 19 22l-9-2V10z" fill="#7850e8" />
      <path d="M16 2A17.500 17.500 0 0 0 16 36l2-8-9-14z" fill="#ff7a10" />
      <path d="M7 12q6 0 11-5 6 5 13 4-1 16-12 20Q7 27 7 12z" fill="#fff" />
      <circle cx="19" cy="17" r="3" fill="#243" />
      <path d="M18 18h2l1 7h-4z" fill="#243" />
    </svg>
  );
}

function NotepadIcon() {
  return (
    <svg width="40" height="38" viewBox="0 0 40 38" aria-hidden="true">
      <path d="M6 4h28l1 32H4z" fill="#f6f6f6" stroke="#999" />
      <path d="M7 1v6M10 1v6M13 1v6M16 1v6M19 1v6M22 1v6M25 1v6M28 1v6M31 1v6" stroke="#a89020" strokeWidth="1.800" />
      <path d="M8 12h22M8 16h22M8 20h20M8 24h16M8 28h14" stroke="#aaa" />
      <path d="M15 28l3-5 18-9 3 4-18 10z" fill="#e8a030" stroke="#8a5810" />
      <path d="M36 14l3 4 1-3-2-2z" fill="#d04040" />
      <path d="M14 29l2-3 1 2z" fill="#333" />
    </svg>
  );
}

function RewIcon() {
  return (
    <svg width="40" height="40" viewBox="0 0 40 40" aria-hidden="true">
      <defs>
        <linearGradient id="heat" x1="0" y1="0" x2="0" y2="1">
          <stop offset="0" stopColor="#2060d0" />
          <stop offset=".4" stopColor="#10c0c0" />
          <stop offset=".7" stopColor="#30e040" />
          <stop offset="1" stopColor="#e0f010" />
        </linearGradient>
      </defs>
      <rect width="40" height="40" fill="#38088c" />
      <path d="M4 38L7 14l2 12 2 8 3 1 3-3 3-2 1-8 1-6 2 10 4 5 3-4 2 4 3 3v4l-5 1H6z" fill="url(#heat)" />
      <path d="M6 36c3-3 5 1 8 0s2-6 4-6 3 6 7 5 6 0 8 1l-2 2H7z" fill="#f0d010" />
      <path d="M19 36l2-7 2 7z" fill="#f04010" />
      <text x="20" y="15" textAnchor="middle" fontSize="15" fontFamily="Liberation Sans, sans-serif" fill="#fff">
        REW
      </text>
      <text x="37" y="22" textAnchor="end" fontSize="7" fontFamily="Liberation Sans, sans-serif" fill="#fff">
        V5.1
      </text>
    </svg>
  );
}

function PaintIcon() {
  return (
    <svg width="40" height="38" viewBox="0 0 40 38" aria-hidden="true">
      <path d="M19 5c11 0 16 7 16 14 0 11-8 17-16 17-5 0-3-6-7-8s-10 0-10-6C2 12 9 5 19 5z" fill="#d4e8f6" stroke="#88a8c0" />
      <circle cx="9" cy="20" r="3.300" fill="#e83828" />
      <circle cx="14" cy="12" r="3.300" fill="#48b848" />
      <circle cx="23" cy="10.500" r="3" fill="#f0c818" />
      <circle cx="17" cy="26" r="3" fill="#5a6a78" />
      <path d="M24 36l8-26 3 1-8 25z" fill="#e08030" stroke="#985018" strokeWidth=".7" />
      <path d="M31 9c0-4 1-7 6-9 2 3 2 7-1 11z" fill="#c8a878" stroke="#8a6a40" strokeWidth=".7" />
    </svg>
  );
}

function Taskbar() {
  return (
    <div className="flex h-12 shrink-0 items-center border-t border-[#3a2830] bg-[linear-gradient(180deg,#ffffff44_0,#ffffff00_6%,#00000022_10%,#00000000_50%),linear-gradient(90deg,#7b5b70_0,#7d5c6c_12%,#6a4a56_15%,#5c4048_18%,#6e505c_23%,#7b5966_30%,#715058_34%,#805a62_40%,#7f5860_50%,#8f6a7c_55%,#926c80_61%,#b48ca6_64%,#a58098_67%,#a07a94_71%,#8b668a_78%,#8d6886_83%,#75566a_87%,#644a54_92%,#6b505c_100%)]">
      <button aria-label="Start" className="ml-[11px] mr-[17px]">
        <StartOrb />
      </button>
      <div className="flex gap-1">
        <TaskButton label="Explorer" frame="open">
          <ExplorerIcon />
        </TaskButton>
        <TaskButton label="Chrome" frame="open">
          <ChromeIcon />
        </TaskButton>
        <TaskButton label="Opera" frame="none">
          <OperaIcon />
        </TaskButton>
        <TaskButton label="Secure browser" frame="none">
          <SecureBrowserIcon />
        </TaskButton>
        <TaskButton label="Notepad" frame="open">
          <NotepadIcon />
        </TaskButton>
        <TaskButton label="REW" frame="active">
          <RewIcon />
        </TaskButton>
        <TaskButton label="Paint" frame="open">
          <PaintIcon />
        </TaskButton>
      </div>
      <div className="ml-auto flex items-center font-['Open_Sans','Noto_Sans',sans-serif] text-white">
        <span className="mr-[22px] pb-1.5 text-sm leading-4">EN</span>
        <svg className="mr-[18px]" width="11" height="7" viewBox="0 0 11 7" aria-hidden="true">
          <path d="M.5 6.500L5.500.5l5 6z" fill="#fff" stroke="#4a3840" strokeWidth=".6" />
        </svg>
        <svg className="mr-2.5" width="20" height="20" viewBox="0 0 20 20" aria-hidden="true">
          <path d="M1.500 1v18" stroke="#fff" strokeWidth="2" />
          <path d="M3 2c3-1 5 0 7 1s4 1 8 0v8c-4 1-6 0-8-1s-4-1-7 0z" fill="#fff" stroke="#43323a" strokeWidth=".6" />
          <circle cx="14" cy="14" r="5.500" fill="#d82818" />
          <path d="M11.500 11.500l5 5M16.500 11.500l-5 5" stroke="#fff" strokeWidth="2" />
        </svg>
        <svg className="mr-[11px]" width="19" height="20" viewBox="0 0 19 20" aria-hidden="true">
          <rect x="4" y="0" width="5" height="3" fill="#fff" />
          <rect x="1" y="2" width="11" height="17" fill="#fff" stroke="#33262c" />
          <path d="M11 6V2M16 6V2M9.500 6h8v3q0 3-3 3v7h-2v-7q-3 0-3-3z" fill="#fff" stroke="#33262c" />
        </svg>
        <svg className="mr-3" width="17" height="16" viewBox="0 0 17 16" aria-hidden="true">
          <path d="M0 12h3v3H0zM3.500 10h3v5h-3z" fill="#fff" />
          <path d="M7 7h2.500v8H7z" fill="#fff" />
          <path d="M10.500 4h2v11h-2zM14 1h2v14h-2z" fill="#ffffff33" stroke="#ccb8c2" strokeWidth=".7" />
        </svg>
        <svg className="mr-[17px]" width="20" height="20" viewBox="0 0 20 20" aria-hidden="true">
          <path d="M1 6h3l5-5v18l-5-5H1z" fill="#fff" stroke="#33262c" strokeWidth=".8" />
          <path d="M12 6q3 4 0 8M15.500 4q4.500 6 0 12" fill="none" stroke="#e8dce2" strokeWidth="1.300" />
        </svg>
        <div className="mr-2 w-[70px] text-center text-sm leading-[22px]">
          <div>10:39 μμ</div>
          <div>19/2/2022</div>
        </div>
        <button aria-label="Show desktop" className="h-[46px] w-3.5 border border-[#3a2830] bg-white/15 shadow-[inset_0_0_0_1px_#ffffff55]" />
      </div>
    </div>
  );
}

/* ---------- page ---------- */

export default function App() {
  return (
    <div className="flex h-screen flex-col overflow-hidden font-['Liberation_Sans',Arial,sans-serif] text-black">
      <TitleBar />
      <nav className="flex h-[23px] shrink-0 items-center border-b border-[#8a8a96] bg-white pl-2.5 text-[11px]">
        {menus.map((m) => (
          <button key={m.label} className={`${m.box} text-left`}>
            <span className="underline underline-offset-2">{m.label[0]}</span>
            {m.label.slice(1)}
          </button>
        ))}
      </nav>
      <main className="flex min-h-0 flex-1 flex-col bg-linear-to-b from-[#fdfdfd] to-[#d8d8d8]">
        <div className="flex h-[62px] shrink-0 justify-between px-1.5 pt-[5px]">
          <div className="flex pr-2">
            {fileTools.map((t) => (
              <ToolButton key={t.label} {...t} />
            ))}
          </div>
          <div className="flex">
            {mainTools.map((t) => (
              <ToolButton key={t.label} {...t} icon={toolIcons[t.label]} />
            ))}
          </div>
          <ToolButton label="Preferences" box="w-19" icon={<WrenchIcon />} />
        </div>
        <div className="flex min-h-0 flex-1">
          <Sidebar />
          <section className="flex min-w-0 flex-1 flex-col">
            <GraphHeader />
            <Chart />
          </section>
        </div>
      </main>
      <StatusBar />
      <Taskbar />
    </div>
  );
}
